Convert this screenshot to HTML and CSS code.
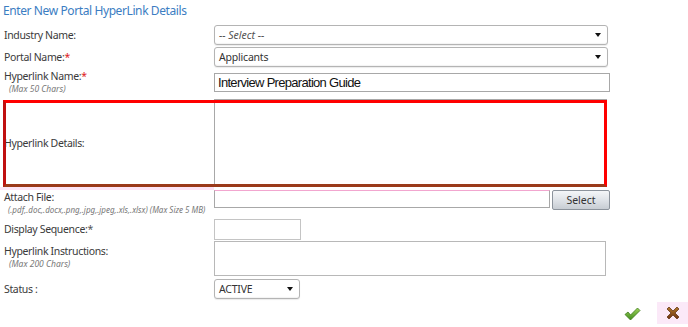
FILE: index.html
```html
<!DOCTYPE html>
<html>
<head>
<meta charset="utf-8">
<link rel="stylesheet" href="styles.css">
</head>
<body>
<div class="page">
  <div class="title">Enter New Portal HyperLink Details</div>
  <div class="form">
    <div class="row r-industry">
      <div class="label">Industry Name:</div>
      <div class="field"><div class="select wide"><span class="ph">-- Select --</span><span class="caret"></span></div></div>
    </div>
    <div class="row r-portal">
      <div class="label">Portal Name:<span class="req">*</span></div>
      <div class="field"><div class="select wide"><span>Applicants</span><span class="caret"></span></div></div>
    </div>
    <div class="row r-name">
      <div class="label">Hyperlink Name:<span class="req">*</span><div class="hint">(Max 50 Chars)</div></div>
      <div class="field"><div class="text-input name-input">Interview Preparation Guide</div></div>
    </div>
    <div class="row r-details">
      <div class="label">Hyperlink Details:</div>
      <div class="field"><div class="textarea details-area"></div></div>
      <div class="mark"></div>
    </div>
    <div class="row r-attach">
      <div class="label">Attach File:<div class="hint">(.pdf,.doc,.docx,.png,.jpg,.jpeg,.xls,.xlsx) (Max Size 5 MB)</div></div>
      <div class="field attach"><div class="text-input file-input"></div><div class="btn">Select</div></div>
    </div>
    <div class="row r-seq">
      <div class="label">Display Sequence:<span class="req-dim">*</span></div>
      <div class="field"><div class="text-input seq-input"></div></div>
    </div>
    <div class="row r-instr">
      <div class="label">Hyperlink Instructions:<div class="hint">(Max 200 Chars)</div></div>
      <div class="field"><div class="textarea instr-area"></div></div>
    </div>
    <div class="row r-status">
      <div class="label">Status :</div>
      <div class="field"><div class="select small"><span>ACTIVE</span><span class="caret"></span></div></div>
    </div>
  </div>
  <div class="actions">
    <span class="icon ok"><svg width="17" height="14" viewBox="0 0 17 14"><defs><linearGradient id="g" x1="0" y1="0" x2="0" y2="1"><stop offset="0" stop-color="#9fd45a"/><stop offset="1" stop-color="#3f8a1c"/></linearGradient></defs><path d="M1 7.5 L4 5 L6.5 8 L13.5 1 L16 3.5 L6.5 13 Z" fill="url(#g)" stroke="#3c7a1c" stroke-width="0.8" stroke-linejoin="round"/></svg></span>
    <span class="icon cancel"><svg width="16" height="16" viewBox="0 0 16 16"><defs><linearGradient id="r" x1="0" y1="0" x2="0" y2="1"><stop offset="0" stop-color="#b07a2a"/><stop offset="1" stop-color="#6e3210"/></linearGradient></defs><path d="M2 4 L4 2 L8 6 L12 2 L14 4 L10 8 L14 12 L12 14 L8 10 L4 14 L2 12 L6 8 Z" fill="url(#r)" stroke="#5a2a0c" stroke-width="0.7" stroke-linejoin="round"/></svg></span>
  </div>
</div>
</body>
</html>
```

FILE: styles.css
```css
* { box-sizing: border-box; }
html, body { margin: 0; padding: 0; background: #fff; }
body { font-family: "Noto Sans", "Open Sans", sans-serif; color: #333; }
.page { width: 688px; height: 327px; position: relative; overflow: hidden; }
.title {
  padding: 2px 0 0 3px;
  height: 22px;
  font-size: 12px;
  line-height: 18px;
  color: #3b7dc2;
  letter-spacing: -0.4px;
  white-space: nowrap;
}
.form { padding-left: 4px; }
.row { display: grid; grid-template-columns: 210px 1fr; position: relative; }
.label { font-size: 10.5px; line-height: 14px; color: #3a3a3a; white-space: nowrap; letter-spacing: -0.35px; }
.req { color: #e02020; }
.req-dim { color: #555; }
.hint { font-size: 8.5px; font-style: italic; color: #777; padding-left: 5px; line-height: 12px; letter-spacing: 0; }
.field { display: flex; align-items: flex-start; }

.select {
  height: 20px;
  border: 1px solid #b4b4b4;
  border-radius: 3px;
  box-shadow: inset 0 -1px 1px rgba(0,0,0,0.05), 0 1px 1px rgba(0,0,0,0.08);
  display: flex; align-items: center; justify-content: space-between;
  padding: 0 6px 0 4px;
  font-size: 10.5px; color: #333; background: #fff; letter-spacing: -0.2px;
}
.select .ph { font-style: italic; color: #555; letter-spacing: 0; }
.select.wide { width: 394px; }
.select.small { width: 86px; }
.caret { width: 0; height: 0; border-left: 3.5px solid transparent; border-right: 3.5px solid transparent; border-top: 4px solid #111; }

.text-input { border: 1px solid #a8a8a8; background: #fff; }
.name-input {
  width: 396px; height: 19px; margin-top: 4px;
  font-family: "Liberation Sans", Arial, sans-serif; font-size: 13px; line-height: 17px; color: #111;
  padding-left: 3px; letter-spacing: -0.7px;
}
.textarea { border: 1px solid #a8a8a8; background: #fff; }

.r-industry { height: 24px; align-items: center; padding-top: 2px; }
.r-portal { height: 22px; align-items: center; }
.r-name { height: 31px; padding-top: 1px; }
.r-details { height: 88px; align-items: center; }
.details-area { width: 393px; height: 88px; }
.mark {
  position: absolute; left: -1px; top: 1px; width: 604px; height: 87px;
  border: 3px solid #ff0000; border-bottom-color: #9a3a1a; border-left-color: #c01010;
  pointer-events: none;
}
.r-attach { height: 31px; padding-top: 2px; }
.r-attach::before {
  content: ""; position: absolute; left: -4px; top: 0; width: 214px; height: 3px; background: #fde4f5;
}
.r-attach .label { padding-top: 1px; position: relative; }
.r-attach .hint { padding-left: 4px; font-size: 8px; }
.attach { gap: 2px; margin-top: 1px; }
.file-input { width: 336px; height: 18px; border-color: #a8a8a8; border-top-color: #f2a6cf; }
.btn {
  width: 58px; height: 20px;
  border: 1px solid #8c939c; border-radius: 2px;
  background: linear-gradient(#f4f6f8, #dfe3e8 50%, #c7ccd3);
  font-size: 10.5px; color: #333; text-align: center; line-height: 18px;
}
.r-seq { height: 22px; align-items: center; }
.seq-input { width: 87px; height: 21px; border-color: #c4c4c4; }
.r-instr { height: 38px; }
.r-instr .label { padding-top: 4px; }
.instr-area { width: 392px; height: 35px; margin-top: 1px; border-color: #b8b8b8; }
.r-status { height: 21px; align-items: center; padding-top: 1px; }

.actions { position: absolute; right: 0; top: 300px; width: 70px; height: 24px; display: flex; align-items: center; }
.icon { display: inline-flex; align-items: center; justify-content: center; }
.ok { width: 18px; margin-left: 5px; margin-top: 4px; }
.cancel { width: 31px; height: 22px; margin-left: 16px; background: #fbe9f8; margin-top: 2px; }
```
